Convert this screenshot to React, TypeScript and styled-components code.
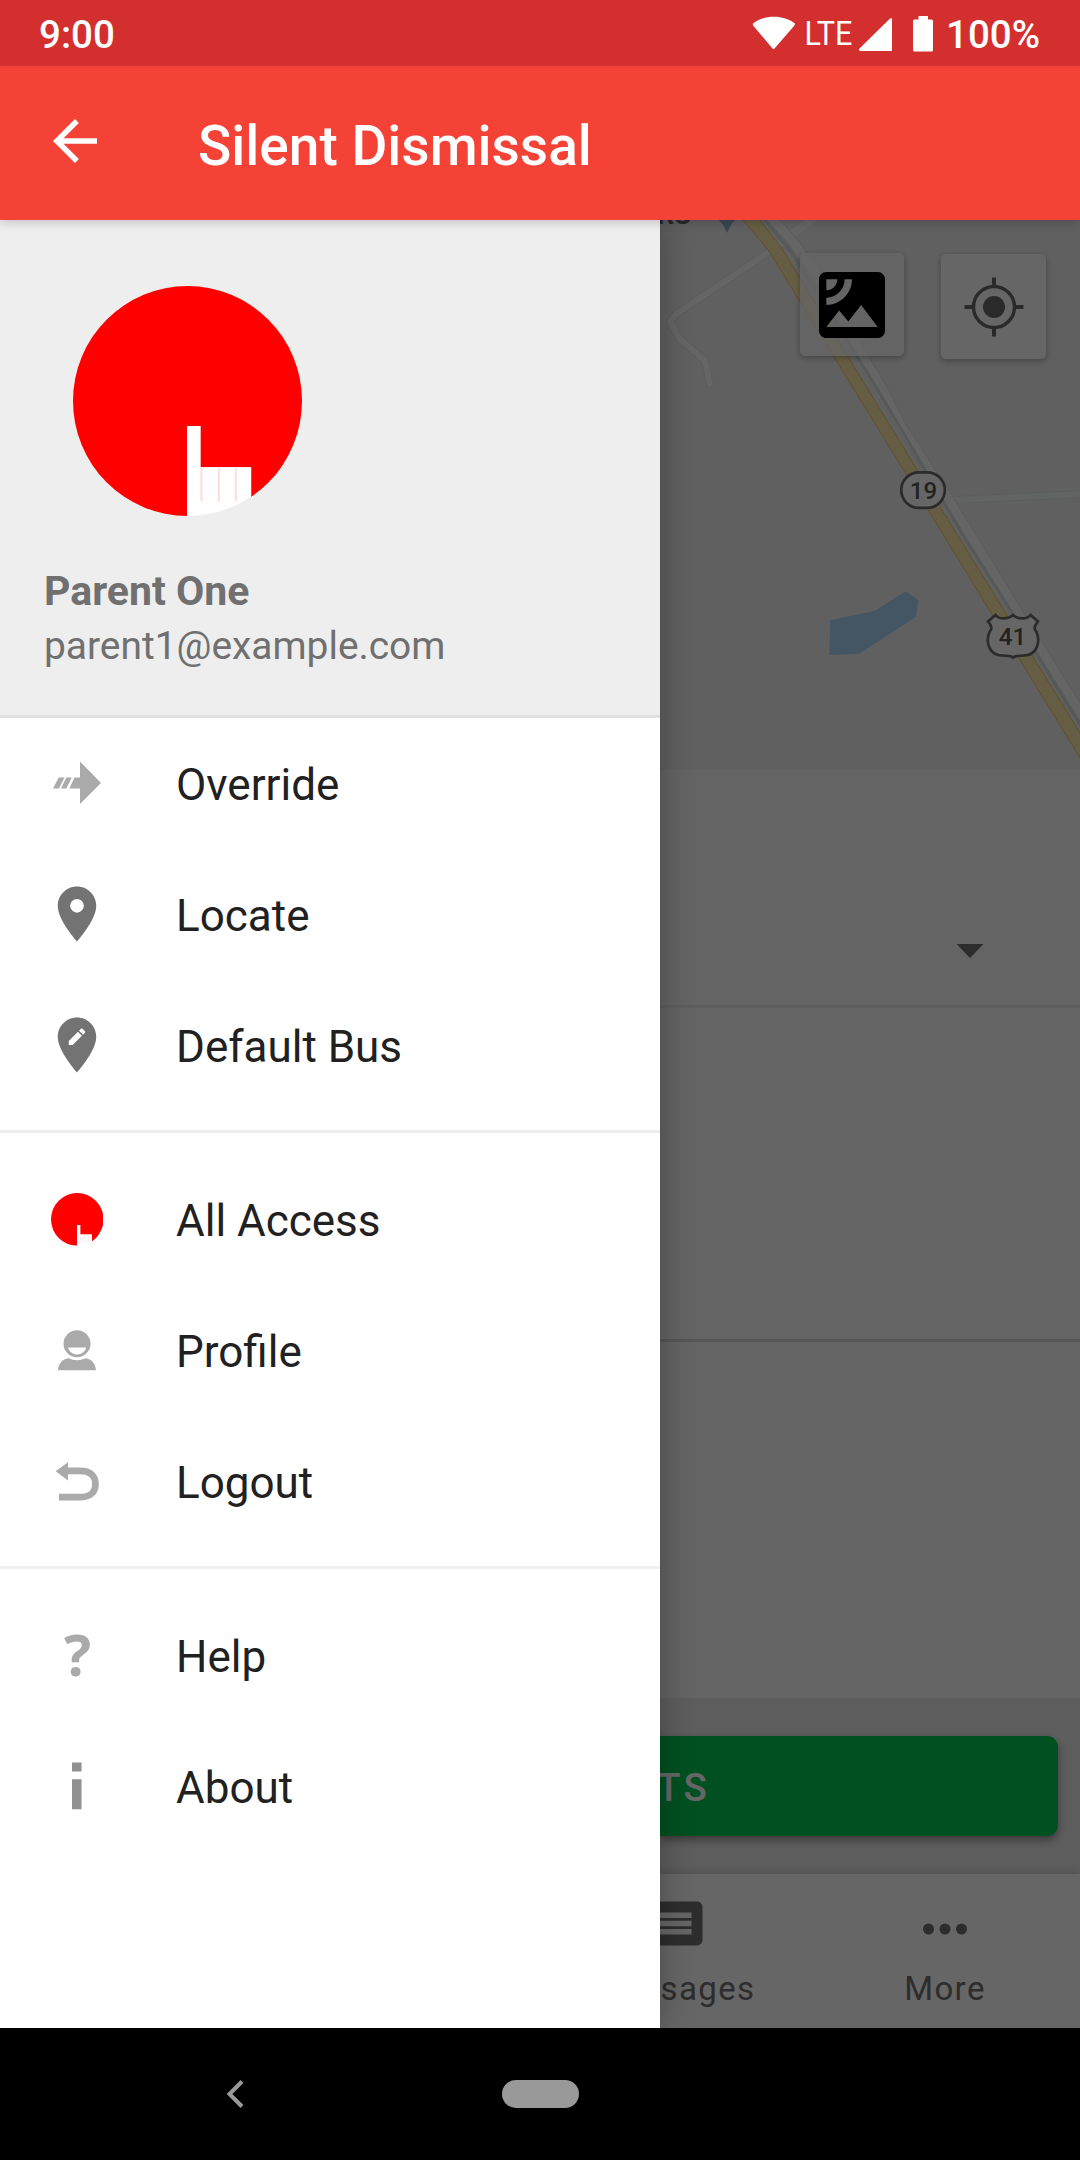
import React from 'react';
import styled, { createGlobalStyle } from 'styled-components';

const GlobalStyle = createGlobalStyle`
  *, *::before, *::after { box-sizing: border-box; }
  html, body { margin: 0; padding: 0; }
  body { font-family: Roboto, 'Noto Sans', sans-serif; background: #000; }
  svg { display: block; flex: none; }
`;

const Screen = styled.div`
  width: 1080px;
  height: 2160px;
  display: flex;
  flex-direction: column;
  overflow: hidden;
`;

const StatusBar = styled.header`
  flex: none;
  height: 66px;
  padding: 2px 40px 0 39px;
  display: flex;
  align-items: center;
  justify-content: space-between;
  background: #d32f2f;
  color: #fff;
  font-size: 38.5px;
  font-weight: 500;
  z-index: 3;
`;

const StatusIcons = styled.div`
  display: flex;
  align-items: center;
`;

const StatusDrawing = styled.svg`
  width: 190px;
  height: 64px;
  margin-top: -2px;
  margin-right: 6px;
  fill: #fff;
`;

const AppBar = styled.div`
  flex: none;
  position: relative;
  z-index: 2;
  height: 154px;
  padding: 0 42px;
  display: flex;
  align-items: center;
  gap: 90px;
  background: #f44336;
  color: #fff;
  box-shadow: 0 2px 10px rgba(0, 0, 0, 0.2);
`;

const BackArrow = styled.svg`
  width: 66px;
  height: 66px;
  margin-top: -4px;
  fill: #fff;
`;

const Title = styled.h1`
  margin: 6px 0 0;
  font-size: 55px;
  font-weight: 500;
  line-height: 64px;
`;

const Body = styled.main`
  flex: 1;
  min-height: 0;
  display: flex;
`;

const Drawer = styled.aside`
  position: relative;
  z-index: 1;
  flex: none;
  width: 660px;
  background: #fff;
  box-shadow: 0 0 32px rgba(0, 0, 0, 0.3);
`;

const Account = styled.section`
  height: 498px;
  padding: 66px 44px 0;
  background: #eee;
  border-bottom: 3px solid #e0e0e0;
  color: #707070;
  font-size: 38.9px;
`;

const Avatar = styled.div`
  width: 229px;
  height: 231px;
  margin-left: 29px;
`;

const AccountName = styled.div`
  margin-top: 51px;
  font-size: 41px;
  font-weight: 700;
  line-height: 47px;
`;

const AccountMail = styled.div`
  margin-top: 8px;
  line-height: 46px;
`;

const Group = styled.ul`
  margin: 0;
  padding: 0 0 19px;
  list-style: none;

  & + & {
    padding-top: 21px;
    border-top: 3px solid #eee;
  }
`;

const Item = styled.li`
  height: 131px;
  padding: 0 44px;
  display: flex;
  align-items: center;
  gap: 66px;
`;

const ItemIcon = styled.svg<{ $color?: string }>`
  width: 66px;
  height: 66px;
  margin-top: -2px;
  overflow: visible;
  fill: ${(p) => p.$color ?? '#aaa'};
`;

const LogoSlot = styled.div`
  width: 66px;
  padding: 0 7px 0 6.5px;
`;

const ItemLabel = styled.span`
  padding-top: 3px;
  font-size: 44px;
  line-height: 52px;
  color: #212121;
`;

const Pane = styled.section`
  position: relative;
  flex: 1;
  min-width: 0;
  display: flex;
  flex-direction: column;
  overflow: hidden;
  background: #fafafa;
`;

const Scrim = styled.div`
  position: absolute;
  inset: 0;
  background: rgba(0, 0, 0, 0.6);
`;

const MapArea = styled.div`
  position: relative;
  flex: none;
  height: 550px;
  background: #f0f0f0;
`;

const MapControls = styled.div`
  position: absolute;
  top: 33px;
  right: 34px;
  display: flex;
  gap: 37px;
`;

const MapButton = styled.button<{ $sheer?: boolean }>`
  width: ${(p) => (p.$sheer ? 104 : 105)}px;
  height: ${(p) => (p.$sheer ? 103 : 105)}px;
  margin: ${(p) => (p.$sheer ? '0' : '1px 0 0')};
  padding: 0;
  display: flex;
  align-items: center;
  justify-content: center;
  border: 0;
  border-radius: 5px;
  background: ${(p) => (p.$sheer ? 'rgba(255, 255, 255, 0.7)' : '#fff')};
  box-shadow: 0 2px 6px rgba(0, 0, 0, 0.3);
`;

const SelectRow = styled.div`
  flex: none;
  height: 238px;
  padding: 174px 96px 0 0;
  display: flex;
  justify-content: flex-end;
  border-bottom: 3px solid #ebebeb;
`;

const EmptyRow = styled.div`
  flex: none;
  height: 334px;
  border-bottom: 3px solid #d8d8d8;
`;

const Filler = styled.div`
  flex: 1;
`;

const Footer = styled.div`
  flex: none;
  height: 176px;
  padding: 38px 22px 38px 0;
  background: #e9e9e9;
`;

const GreenButton = styled.div`
  height: 100px;
  border-radius: 0 11px 11px 0;
  display: flex;
  align-items: center;
  background: #00c853;
  color: #fff;
  font-size: 38.5px;
  font-weight: 500;
  letter-spacing: 3.4px;
  box-shadow: 0 4px 9px rgba(0, 0, 0, 0.4);

  span { margin: 3px 0 0 -3px; }
`;

const Tabs = styled.nav`
  flex: none;
  height: 154px;
  display: flex;
  background: #fff;
  box-shadow: 0 -2px 8px rgba(0, 0, 0, 0.14);
`;

const Tab = styled.div<{ $cut?: boolean }>`
  width: ${(p) => (p.$cut ? 150 : 270)}px;
  padding-top: 22px;
  display: flex;
  flex-direction: column;
  align-items: ${(p) => (p.$cut ? 'flex-start' : 'center')};
  color: #717171;
  font-size: 33px;
  line-height: 40px;
  letter-spacing: 1.4px;

  svg {
    width: 66px;
    height: 66px;
    margin-left: ${(p) => (p.$cut ? -18 : 0)}px;
    fill: #717171;
  }
  span { margin: 7px 0 0 ${(p) => (p.$cut ? 0.5 : 0)}px; }
`;

const SystemNav = styled.footer`
  flex: none;
  height: 132px;
  display: grid;
  grid-template-columns: 502px 77px 1fr;
  align-items: center;
  background: #000;
`;

const SystemBack = styled.svg`
  width: 20px;
  height: 32px;
  margin-left: 225px;
  fill: none;
  stroke: #999;
  stroke-width: 4;
`;

const HomePill = styled.div`
  height: 28px;
  border-radius: 14px;
  background: #999;
`;

function Logo({ id }: { id: string }) {
  return (
    <svg width="100%" viewBox="0 0 230 231">
      <clipPath id={id}>
        <ellipse cx="115" cy="115.5" rx="115" ry="115.5" />
      </clipPath>
      <g clipPath={`url(#${id})`}>
        <path d="M0 0H230V231H179V182H128V140.500H114.500V231H0z" fill="#f00" />
        <path d="M179 182h51v49h-51z" fill="#f00" />
        <path d="M114.500 140.500h13.500v41.500h51v49h-64.500z" fill="#fff" />
        <path d="M129 183v33M146.500 183v33M163.500 183v33" stroke="#ffdcdc" strokeWidth="2" />
      </g>
    </svg>
  );
}

const PIN = 'M12 2C8.14 2 5 5.14 5 9c0 5.25 7 13 7 13s7-7.75 7-13c0-3.86-3.14-7-7-7z';

function OverrideIcon() {
  return (
    <ItemIcon viewBox="0 1 66 66">
      <path d="M36 12.500L57 34 36 55V39.500H25.300L30.500 28.500H36z" />
      <path d="M14.700 28.500h5.800l-5.500 11H9zM22.400 28.500h5.400l-5.500 11h-5.400z" />
    </ItemIcon>
  );
}

function LocateIcon() {
  return (
    <ItemIcon viewBox="0 0 24 24" $color="#737373">
      <path d={`${PIN}m0 9.500a2.500 2.500 0 1 1 0-5 2.500 2.500 0 0 1 0 5z`} />
    </ItemIcon>
  );
}

function EditLocationIcon() {
  return (
    <ItemIcon viewBox="0 0 24 24" $color="#737373">
      <path
        d={`${PIN}m-1.560 10H9v-1.440l3.350-3.340 1.430 1.430L10.440 12zm4.450-4.450l-.7.7-1.440-1.440.7-.7c.15-.15.39-.15.54 0l.9.9c.15.15.15.39 0 .54z`}
      />
    </ItemIcon>
  );
}

function ProfileIcon() {
  return (
    <ItemIcon viewBox="0 0 66 66">
      <path
        fillRule="evenodd"
        d="M33 13.300a13.500 13.500 0 1 0 0 27 13.500 13.500 0 0 0 0-27zM24 30.500h18.200c-1 4-4.600 7-9.100 7s-8.100-3-9.100-7z"
      />
      <path d="M14 53.300C14.500 46.500 18.500 42 24.500 41.300Q33 45 41.500 41.300C47.500 42 51.500 46.500 52 53.300z" />
    </ItemIcon>
  );
}

function LogoutIcon() {
  return (
    <ItemIcon viewBox="0 0 66 66">
      <path d="M11.700 23.200L24 14.200v18.300z" />
      <path
        d="M23 22.800H36C46.500 22.800 51.500 28 51.500 36S46.500 49.200 36 49.200H15"
        fill="none"
        stroke="#aaa"
        strokeWidth="6.700"
      />
    </ItemIcon>
  );
}

function HelpIcon() {
  return (
    <ItemIcon viewBox="0 0 66 66">
      <text x="33.500" y="54" textAnchor="middle" fontFamily="'Open Sans', sans-serif" fontWeight="700" fontSize="57">
        ?
      </text>
    </ItemIcon>
  );
}

function AboutIcon() {
  return (
    <ItemIcon viewBox="0 0 66 66" $color="#909090">
      <path d="M28 9.500h9.500v9H28zM28 26.200h9.500v30H28z" />
    </ItemIcon>
  );
}

const GROUPS = [
  [
    { label: 'Override', icon: <OverrideIcon /> },
    { label: 'Locate', icon: <LocateIcon /> },
    { label: 'Default Bus', icon: <EditLocationIcon /> },
  ],
  [
    { label: 'All Access', icon: <LogoSlot><Logo id="logo-small" /></LogoSlot> },
    { label: 'Profile', icon: <ProfileIcon /> },
    { label: 'Logout', icon: <LogoutIcon /> },
  ],
  [
    { label: 'Help', icon: <HelpIcon /> },
    { label: 'About', icon: <AboutIcon /> },
  ],
];

function MapDrawing() {
  return (
    <svg width="420" height="550" viewBox="660 220 420 550" fontFamily="Roboto, sans-serif">
      <g fill="none" strokeLinejoin="round" strokeLinecap="round">
        <path d="M770 251L676 314 670 322 679 338 705 361 710 384" stroke="#e6e6e6" strokeWidth="8" />
        <path d="M770 251L676 314 670 322 679 338 705 361 710 384" stroke="#fcfcfc" strokeWidth="6" />
        <path d="M950 500L1084 494" stroke="#e4e9e9" strokeWidth="8" />
        <path d="M950 500L1084 494" stroke="#f6fafa" strokeWidth="6" />
        <path d="M818 215L776 246" stroke="#fcfcfc" strokeWidth="8" />
        <path d="M768 214L793 242 820 280 866 362 882 388 898 420 912 443 949 500 1015 608 1084 718" stroke="#e3e3e3" strokeWidth="11" />
        <path d="M768 214L793 242 820 280 866 362 882 388 898 420 912 443 949 500 1015 608 1084 718" stroke="#fdfdfd" strokeWidth="9" />
        <path d="M760 214L792 253 873 382 917 456 961 532 1008 606 1053 681 1084 731" stroke="#dadede" strokeWidth="3" />
      </g>
      <path d="M738 214L769 251 906 474 1082 761V736L919 473 781 247 755 214z" fill="#ffebaa" stroke="#f0c56c" strokeWidth="1" />
      <path d="M830.300 620.300L875 610.700 905.700 591.300 918.300 600 916 616.700 859.300 653.700 829.300 655z" fill="#aad6fb" />
      <path d="M718 219h18l-5 6-4 8-4-8z" fill="#8fb4c6" />
      <text x="657" y="223.500" fontSize="27" fontWeight="700" fill="#62686b">RS</text>
      <rect x="901.300" y="472.300" width="43.500" height="35.500" rx="17.500" fill="#fff" stroke="#6c6c6c" strokeWidth="2.700" />
      <text x="923.500" y="498.500" fontSize="24" fontWeight="500" textAnchor="middle" fill="#555">19</text>
      <path
        d="M988 621.500L995.500 615C999 619.500 1008 619.500 1013 615 1018 619.500 1027 619.500 1030.500 615L1038 621.500C1033.500 627 1034 629 1036.500 632 1041 643 1036 655.500 1024 655.500 1018 655.500 1015 655.500 1013 657.500 1011 655.500 1008 655.500 1002 655.500 990 655.500 985 643 989.500 632 992 629 992.500 627 988 621.500z"
        fill="#fff"
        stroke="#6c6c6c"
        strokeWidth="2.700"
      />
      <text x="1012.500" y="645" fontSize="24" fontWeight="500" textAnchor="middle" fill="#555">41</text>
    </svg>
  );
}

export default function App() {
  return (
    <>
      <GlobalStyle />
      <Screen>
        <StatusBar>
          <span>9:00</span>
          <StatusIcons>
            <StatusDrawing viewBox="750 0 190 64">
              <path d="M753 22.500C764 13.500 784 13.500 795 22.500Q795 24 794 25L774.500 47.500Q773.500 49 772.500 47.500L753.500 25Q752.500 24 753 22.500z" />
              <text x="804.500" y="44" fontFamily="Roboto, sans-serif" fontSize="34" fontWeight="400" textLength="48" lengthAdjust="spacingAndGlyphs">
                LTE
              </text>
              <path d="M859 48L890 17.500Q892 16.500 892 18.500V50H860Q858.500 49.500 859 48z" />
              <path d="M918.500 15h9.500v3.500h3.500q1.500 0 1.500 1.500v29q0 1.500-1.500 1.500h-17q-1.500 0-1.500-1.500v-29q0-1.500 1.500-1.500h4z" />
            </StatusDrawing>
            <span>100%</span>
          </StatusIcons>
        </StatusBar>

        <AppBar>
          <BackArrow viewBox="0 0 24 24">
            <path d="M20 11H7.830l5.590-5.590L12 4l-8 8 8 8 1.410-1.410L7.830 13H20v-2z" />
          </BackArrow>
          <Title>Silent Dismissal</Title>
        </AppBar>

        <Body>
          <Drawer>
            <Account>
              <Avatar>
                <Logo id="logo-large" />
              </Avatar>
              <AccountName>Parent One</AccountName>
              <AccountMail>parent1@example.com</AccountMail>
            </Account>
            {GROUPS.map((items, i) => (
              <Group key={i}>
                {items.map((item) => (
                  <Item key={item.label}>
                    {item.icon}
                    <ItemLabel>{item.label}</ItemLabel>
                  </Item>
                ))}
              </Group>
            ))}
          </Drawer>

          <Pane>
            <MapArea>
              <MapDrawing />
              <MapControls>
                <MapButton $sheer>
                  <svg width="88" height="88" viewBox="0 0 24 24">
                    <path d="M19 3H5c-1.100 0-2 .9-2 2v14c0 1.100.9 2 2 2h14c1.100 0 2-.9 2-2V5c0-1.100-.9-2-2-2zM5 4.990h3C8 6.650 6.660 8 5 8V4.990zM5 12v-2c2.760 0 5-2.250 5-5.010h2C12 8.860 8.870 12 5 12zm0 6l3.500-4.500 2.500 3.010L14.500 12l4.500 6H5z" />
                  </svg>
                </MapButton>
                <MapButton>
                  <svg width="60" height="60" viewBox="-30 -30 60 60" fill="none" stroke="#6a6a6a">
                    <circle r="11" fill="#6a6a6a" stroke="none" />
                    <circle r="20.500" strokeWidth="3.400" />
                    <path d="M0-29.500v8M0 21.500v8M-29.500 0h8M21.500 0h8" strokeWidth="4" />
                  </svg>
                </MapButton>
              </MapControls>
            </MapArea>
            <SelectRow>
              <svg width="28" height="14" viewBox="0 0 28 14" fill="#717171">
                <path d="M.500 0h27L14 14z" />
              </svg>
            </SelectRow>
            <EmptyRow />
            <Filler />
            <Footer>
              <GreenButton>
                <span>TS</span>
              </GreenButton>
            </Footer>
            <Tabs>
              <Tab $cut>
                <svg viewBox="0 0 24 24">
                  <path d="M20 2H4c-1.100 0-1.990.9-1.990 2L2 22l4-4h14c1.100 0 2-.9 2-2V4c0-1.100-.9-2-2-2zm-2 12H6v-2h12v2zm0-3H6V9h12v2zm0-3H6V6h12v2z" />
                </svg>
                <span>sages</span>
              </Tab>
              <Tab>
                <svg viewBox="0 0 24 24">
                  <path d="M6 10a2 2 0 1 0 0 4 2 2 0 0 0 0-4zm12 0a2 2 0 1 0 0 4 2 2 0 0 0 0-4zm-6 0a2 2 0 1 0 0 4 2 2 0 0 0 0-4z" />
                </svg>
                <span>More</span>
              </Tab>
            </Tabs>
            <Scrim />
          </Pane>
        </Body>

        <SystemNav>
          <SystemBack viewBox="0 0 20 32">
            <path d="M17 3.500L4.500 16 17 28.500" />
          </SystemBack>
          <HomePill />
        </SystemNav>
      </Screen>
    </>
  );
}
